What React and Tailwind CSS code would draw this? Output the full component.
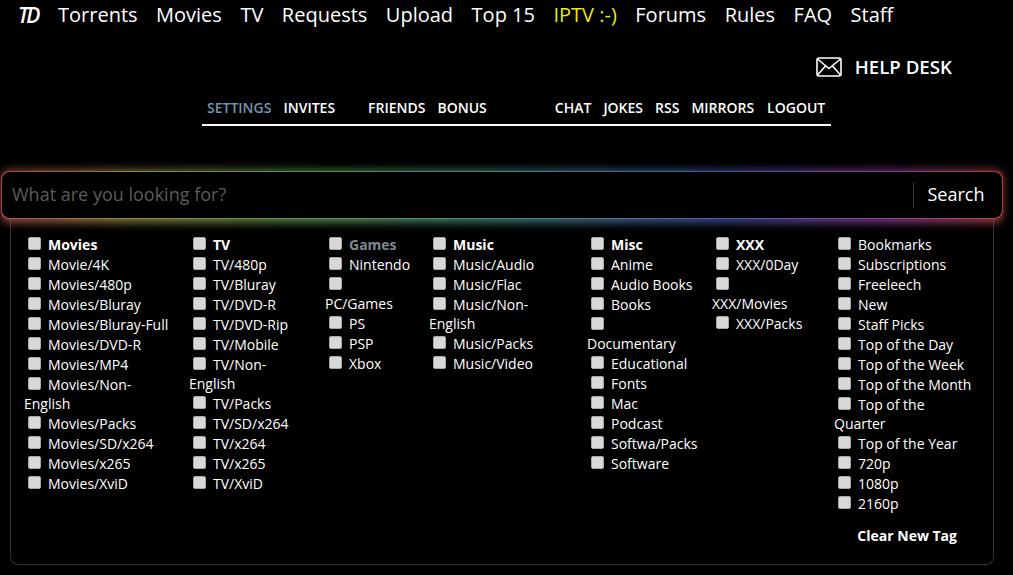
import React from 'react';

const NAV = ['Torrents', 'Movies', 'TV', 'Requests', 'Upload', 'Top 15', 'IPTV :-)', 'Forums', 'Rules', 'FAQ', 'Staff'];

const COLUMNS = [
    {
        width: 'w-[165px]', text: 'w-[147px]',
        items: ['*Movies', 'Movie/4K', 'Movies/480p', 'Movies/Bluray', 'Movies/Bluray-Full', 'Movies/DVD-R', 'Movies/MP4', 'Movies/Non-English', 'Movies/Packs', 'Movies/SD/x264', 'Movies/x265', 'Movies/XviD']
    },
    {
        width: 'w-[136px]', text: 'w-[110px]',
        items: ['*TV', 'TV/480p', 'TV/Bluray', 'TV/DVD-R', 'TV/DVD-Rip', 'TV/Mobile', 'TV/Non-English', 'TV/Packs', 'TV/SD/x264', 'TV/x264', 'TV/x265', 'TV/XviD']
    },
    {
        width: 'w-[104px]', text: 'w-[88px]',
        items: ['#Games', 'Nintendo', 'PC/Games', 'PS', 'PSP', 'Xbox']
    },
    {
        width: 'w-[158px]', text: 'w-[110px]',
        items: ['*Music', 'Music/Audio', 'Music/Flac', 'Music/Non-English', 'Music/Packs', 'Music/Video']
    },
    {
        width: 'w-[125px]', text: 'w-[112px]',
        items: ['*Misc', 'Anime', 'Audio Books', 'Books', 'Documentary', 'Educational', 'Fonts', 'Mac', 'Podcast', 'Softwa/Packs', 'Software']
    },
    {
        width: 'w-[122px]', text: 'w-[92px]',
        items: ['*XXX', 'XXX/0Day', 'XXX/Movies', 'XXX/Packs']
    },
    {
        width: 'w-[150px]', text: 'w-[140px]',
        items: ['Bookmarks', 'Subscriptions', 'Freeleech', 'New', 'Staff Picks', 'Top of the Day', 'Top of the Week', 'Top of the Month', 'Top of the Quarter', 'Top of the Year', '720p', '1080p', '2160p']
    }
];

const Category = ({ label }) => {
    const bold = label[0] === '*';
    const muted = label[0] === '#';
    const name = bold || muted ? label.slice(1) : label;
    return (
        <div className="leading-[19px]">
            {/* the checkbox makes its line 20px, wrapped text lines stay 19px */}
            <input
                type="checkbox"
                className="appearance-none w-[13px] h-[13px] mt-[3px] ml-[4px] mr-[7px] align-baseline rounded-[2px] bg-[#d8d8d8] border border-[#a8a8a8]"
            />
            <span className={bold ? 'font-bold text-white' : muted ? 'font-bold text-[#7d8b93]' : 'text-white'}>{name}</span>
        </div>
    );
};

const App = () => {
    return (
        <div className="w-[1013px] h-[575px] overflow-hidden bg-black text-white font-['Open_Sans',sans-serif]">

            {/* Main nav */}
            <div className="flex items-center h-[30px] pl-[18px]">
                <span className="w-[40px] text-[21px] font-semibold italic tracking-[-2.5px] leading-none">TD</span>
                <div className="flex gap-[18.5px] text-[20px] leading-[30px]">
                    {NAV.map((item) => (
                        <span key={item} className={item === 'IPTV :-)' ? 'text-[#e8e81c]' : 'text-white'}>{item}</span>
                    ))}
                </div>
            </div>

            {/* Help desk */}
            <div className="flex items-center justify-end h-[30px] mt-[22px] pr-[61px]">
                <svg width="26" height="20" viewBox="0 0 26 20" fill="none" stroke="white" strokeWidth="1.6" className="mr-[13px]">
                    <rect x="1" y="1" width="24" height="18" rx="2" />
                    <path d="M1.5 2 L13 11.5 L24.5 2 M1.5 18 L9.5 9 M24.5 18 L16.5 9" />
                </svg>
                <span className="text-[18.7px] font-semibold">HELP DESK</span>
            </div>

            {/* Sub nav */}
            <div className="flex items-center w-[629px] h-[34px] ml-[202px] mt-[10px] pl-[5px] pb-[2px] border-b-2 border-white text-[14px] font-semibold">
                <span className="text-[#7295b0]">SETTINGS</span>
                <span className="ml-[12px]">INVITES</span>
                <span className="ml-[33px]">FRIENDS</span>
                <span className="ml-[12px]">BONUS</span>
                <span className="ml-[68px]">CHAT</span>
                <span className="ml-[12px]">JOKES</span>
                <span className="ml-[12px]">RSS</span>
                <span className="ml-[12px]">MIRRORS</span>
                <span className="ml-[13px]">LOGOUT</span>
            </div>

            {/* Search bar */}
            <div className="relative z-10 w-[1000px] ml-[2px] mt-[46px] h-[46px]">
                <div className="absolute -inset-x-[1px] -top-[2px] -bottom-[5px] rounded-lg blur-[4px] opacity-70 bg-[linear-gradient(90deg,#c85a5a_0%,#b0a050_12%,#6fb060_30%,#4f9a9a_52%,#4f60c0_72%,#a04ab0_88%,#d05050_100%)]"></div>
                <div className="absolute -inset-[1px] rounded-lg opacity-65 bg-[linear-gradient(90deg,#c85a5a_0%,#b0a050_12%,#6fb060_30%,#5f9a9a_52%,#5f70c0_72%,#a04ab0_88%,#d05050_100%)]"></div>
                <div className="relative flex items-center h-full pb-[1px] rounded-lg bg-black">
                    <span className="flex-1 pl-[10px] text-[18px] text-[#5c5c5c]">What are you looking for?</span>
                    <div className="w-px h-[26px] bg-[#333]"></div>
                    <span className="w-[88px] pr-[4px] text-center text-[18px] text-white">Search</span>
                </div>
            </div>

            {/* Categories */}
            <div className="relative mx-[10px] w-[984px] h-[347px] rounded-b-lg border border-t-0 border-[#333] text-[14px]">
                <div className="flex pl-[13px] pt-[16px]">
                    {COLUMNS.map((col, i) => (
                        <div key={i} className={col.width}>
                            <div className={col.text}>
                                {col.items.map((item) => (
                                    <Category key={item} label={item} />
                                ))}
                            </div>
                        </div>
                    ))}
                </div>
                <span className="absolute right-[36px] top-[307px] font-bold text-[14px] text-white">Clear New Tag</span>
            </div>
        </div>
    );
};

export default App;
